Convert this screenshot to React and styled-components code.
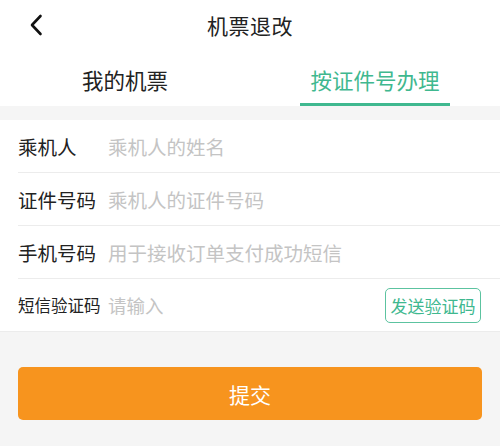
import React from 'react';
import styled, { createGlobalStyle } from 'styled-components';

const GlobalStyle = createGlobalStyle`
  html, body {
    margin: 0;
    padding: 0;
    background: #f5f5f5;
  }
  body {
    font-family: "Noto Sans CJK SC", "Noto Sans", sans-serif;
    color: #222;
  }
`;

const fields = [
  { label: '乘机人', placeholder: '乘机人的姓名' },
  { label: '证件号码', placeholder: '乘机人的证件号码' },
  { label: '手机号码', placeholder: '用于接收订单支付成功短信' },
  { label: '短信验证码', placeholder: '请输入', small: true, code: true },
];

const App = () => (
  <Page>
    <GlobalStyle />
    <Header>
      <Back aria-label="返回">
        <svg width="14" height="22" viewBox="0 0 14 22" fill="none">
          <path d="M11.5 2 L3 11 L11.5 20" stroke="#111" strokeWidth="2.6" strokeLinecap="round" strokeLinejoin="round" />
        </svg>
      </Back>
      <Title>机票退改</Title>
    </Header>

    <Tabs>
      <Tab>我的机票</Tab>
      <Tab active>按证件号办理</Tab>
    </Tabs>

    <Form>
      {fields.map((f) => (
        <Row key={f.label}>
          <Label small={f.small}>{f.label}</Label>
          <Input placeholder={f.placeholder} small={f.small} />
          {f.code && <CodeButton>发送验证码</CodeButton>}
        </Row>
      ))}
    </Form>

    <Footer>
      <Submit>提交</Submit>
    </Footer>
  </Page>
);

// Styled components
const Page = styled.div`
  width: 500px;
  min-height: 446px;
  background: #f5f5f5;
`;

const Header = styled.div`
  align-items: center;
  background: #fff;
  display: flex;
  height: 50px;
  justify-content: center;
  position: relative;
`;

const Back = styled.div`
  display: flex;
  left: 29px;
  position: absolute;
  top: 14px;
`;

const Title = styled.div`
  font-size: 21px;
  letter-spacing: 0.5px;
`;

const Tabs = styled.div`
  background: #fff;
  display: flex;
  height: 56px;
`;

const Tab = styled.div`
  align-items: center;
  color: ${(p) => (p.active ? '#3fb88f' : '#222')};
  display: flex;
  flex: 1;
  font-size: 21.5px;
  justify-content: center;
  padding-top: 2px;
  position: relative;
  &::after {
    background: #3fb88f;
    bottom: 0;
    content: '';
    display: ${(p) => (p.active ? 'block' : 'none')};
    height: 3px;
    left: 50px;
    position: absolute;
    right: 50px;
  }
`;

const Form = styled.div`
  background: #fff;
  border-bottom: 1px solid #ececec;
  margin-top: 14px;
  padding-left: 18px;
`;

const Row = styled.div`
  align-items: center;
  border-bottom: 1px solid #ececec;
  display: flex;
  height: 52px;
  padding-right: 19px;
  &:last-child {
    border-bottom: none;
  }
`;

const Label = styled.div`
  font-size: ${(p) => (p.small ? '16.5px' : '19.5px')};
  width: 90px;
  flex-shrink: 0;
`;

const Input = styled.input`
  background: transparent;
  border: none;
  color: #222;
  flex: 1;
  font-family: inherit;
  font-size: ${(p) => (p.small ? '18.5px' : '19.5px')};
  min-width: 0;
  outline: none;
  padding: 0;
  &::placeholder {
    color: #c4c4c4;
  }
`;

const CodeButton = styled.button`
  background: #fff;
  border: 1.5px solid #5cc3a0;
  border-radius: 5px;
  color: #3fb88f;
  font-family: inherit;
  font-size: 17px;
  height: 35px;
  padding: 0 4px;
  width: 96px;
`;

const Footer = styled.div`
  padding: 35px 18px 0;
`;

const Submit = styled.button`
  background: #f7941e;
  border: none;
  border-radius: 5px;
  color: #fff;
  display: block;
  font-family: inherit;
  font-size: 21px;
  height: 53px;
  width: 100%;
`;

export default App;
